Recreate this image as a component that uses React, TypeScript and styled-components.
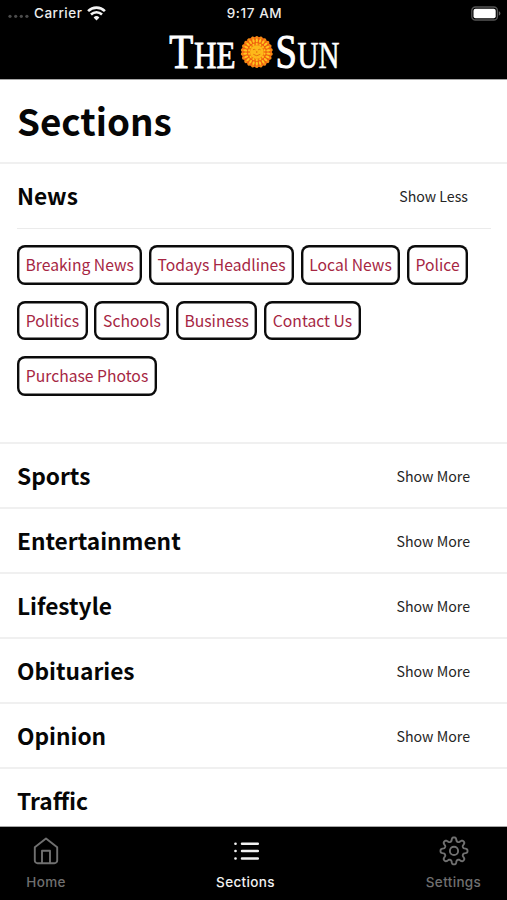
import React from "react";
import styled, { createGlobalStyle } from "styled-components";

const GlobalStyle = createGlobalStyle`
  * { box-sizing: border-box; }
  html, body, #root { margin: 0; height: 100%; }
  body { background: #fff; overflow: hidden; }
  h1, h2 { margin: 0; }
  button { font: inherit; border: 0; background: none; padding: 0; margin: 0; white-space: nowrap; }
`;

const sans = `"Noto Sans CJK SC", "Noto Sans", sans-serif`;
const system = `Inter, "Liberation Sans", sans-serif`;

const Screen = styled.div`
  width: 507px;
  height: 900px;
  display: flex;
  flex-direction: column;
  background: #fff;
  color: #060606;
  font-family: ${sans};
`;

const Header = styled.header`
  flex: none;
  height: 80px;
  background: #000;
  border-bottom: 1px solid #a6a6a6;
`;

const StatusBar = styled.div`
  height: 27px;
  display: grid;
  grid-template-columns: 1fr auto 1fr;
  align-items: center;
  padding: 0 6px 1px 8px;
  color: #ededed;
  font: 450 13.5px/26px ${system};
  svg { display: block; }
`;

const Signal = styled.div`
  display: flex;
  align-items: center;
`;

const Carrier = styled.span`
  margin: 0 5px 0 5px;
  letter-spacing: 0.5px;
`;

const Clock = styled.span`
  letter-spacing: 0.6px;
`;

const BatterySlot = styled.div`
  display: flex;
  justify-content: flex-end;
`;

const LogoRow = styled.div`
  display: flex;
  justify-content: center;
  margin-top: -6px;
  svg { display: block; }
`;

const Main = styled.main`
  flex: 1;
  min-height: 0;
  overflow: hidden;
`;

const PageTitle = styled.h1`
  height: 84px;
  padding-left: 17px;
  border-bottom: 2px solid #f0f0f0;
  font-size: 36.8px;
  line-height: 81px;
  font-weight: 700;
`;

const Section = styled.section<{ $height: number }>`
  height: ${(p) => p.$height}px;
  border-bottom: 2px solid #f0f0f0;
`;

const SectionHead = styled.div<{ $open?: boolean }>`
  height: ${(p) => (p.$open ? 65 : 63)}px;
  margin: 0 16px 0 17px;
  padding-right: ${(p) => (p.$open ? 23 : 21)}px;
  border-bottom: ${(p) => (p.$open ? "1px solid #ebebeb" : "0")};
  display: flex;
  align-items: center;
  justify-content: space-between;
`;

const SectionName = styled.h2`
  font-size: 22.7px;
  line-height: 34px;
  font-weight: 700;
`;

const Toggle = styled.button`
  color: #252525;
  font-size: 14.2px;
  line-height: 22px;
`;

const ChipList = styled.div`
  padding: 16px 17px 0;
  display: grid;
  row-gap: 16px;
`;

const ChipRow = styled.div`
  display: flex;
  gap: 6.6px;
`;

const Chip = styled.button<{ $width: number }>`
  flex: none;
  width: ${(p) => p.$width}px;
  height: 39.6px;
  padding-bottom: 0.6px;
  border-radius: 8px;
  box-shadow: inset 0 0 0 2.4px #0b0b0b;
  display: flex;
  align-items: center;
  justify-content: center;
  color: #a62643;
  font-size: 15.7px;
  line-height: 23px;
`;

const TabBar = styled.nav`
  flex: none;
  height: 74px;
  background: #000;
  border-top: 1px solid #a6a6a6;
  display: grid;
  grid-template-columns: 199.5px 208px 60px;
  justify-items: start;
  align-items: start;
  padding: 9px 0 0 16px;
`;

const Tab = styled.button<{ $active?: boolean }>`
  width: 60px;
  display: flex;
  flex-direction: column;
  align-items: center;
  gap: 6px;
  color: ${(p) => (p.$active ? "#f2f2f2" : "#707070")};
  font: 450 13.5px/20px ${system};
  letter-spacing: 0.35px;
  svg { display: block; flex: none; }
`;

const WifiIcon = () => (
  <svg width="19" height="15" viewBox="0 0 19 15" fill="none" stroke="#f4f4f4" strokeWidth="2.6">
    <path d="M1.1 5.1a12 12 0 0 1 16.8 0" />
    <path d="M4 8.5a8 8 0 0 1 11 0" />
    <path d="M6.6 11.4a4.3 4.3 0 0 1 5.8 0L9.5 14.4Z" fill="#f4f4f4" stroke="none" />
  </svg>
);

const SignalDots = () => (
  <svg width="21" height="10" viewBox="0 0 21 10" fill="#4c4c4c">
    {[2, 7.7, 13.3, 18.9].map((x) => (
      <circle key={x} cx={x} cy="8.3" r="1.6" />
    ))}
  </svg>
);

const Battery = () => (
  <svg width="30" height="15" viewBox="0 0 30 15">
    <rect x="0.8" y="1" width="25.6" height="13" rx="3.6" fill="none" stroke="#555" strokeWidth="1.3" />
    <rect x="2.5" y="2.7" width="22.2" height="9.6" rx="2" fill="#fff" />
    <path d="M27.8 5.3q1.6.6 1.6 2.2t-1.6 2.2Z" fill="#666" />
  </svg>
);

const ring = (count: number) => Array.from({ length: count }, (_, i) => (360 / count) * i);

const Logo = () => (
  <svg width="178" height="58" viewBox="-2 -6 178 58">
    <g fill="#fff" stroke="#fff" fontFamily="Liberation Serif, Times New Roman, serif">
      <text x="2.2" y="41.2" fontSize="48.5" strokeWidth="1.1" textLength="24" lengthAdjust="spacingAndGlyphs">T</text>
      <text x="27" y="41.2" fontSize="38" strokeWidth="0.8" textLength="41.6" lengthAdjust="spacingAndGlyphs">HE</text>
      <text x="108.4" y="41.2" fontSize="48.5" strokeWidth="1.1" textLength="21.4" lengthAdjust="spacingAndGlyphs">S</text>
      <text x="130.6" y="41.2" fontSize="38" strokeWidth="0.7" textLength="41.8" lengthAdjust="spacingAndGlyphs">UN</text>
    </g>
    <g transform="translate(89.8 25)">
      <circle r="15.2" fill="#f0600f" />
      {ring(22).map((a) => (
        <circle key={a} cy="-14.6" r="1.5" fill="#f58a14" transform={`rotate(${a})`} />
      ))}
      {ring(22).map((a) => (
        <ellipse key={a} cy="-11.6" rx="1.1" ry="2" fill="#ffc51f" transform={`rotate(${a})`} />
      ))}
      <circle r="9" fill="#f37a10" />
      {ring(14).map((a) => (
        <circle key={a} cy="-7.9" r="1" fill="#ffc71d" transform={`rotate(${a})`} />
      ))}
      <circle r="6.8" fill="#fdb91a" />
      <path d="M-3.8-2.2q1.3-1 2.4 0M1.4-2.2q1.2-1 2.4 0M0-1v2M-3.5 2.3Q0 5.2 3.5 2.3" fill="none" stroke="#e5730f" strokeWidth="1" />
    </g>
  </svg>
);

const HomeIcon = () => (
  <svg width="30" height="30" viewBox="0 0 30 30" fill="none" stroke="currentColor" strokeWidth="1.9" strokeLinejoin="round">
    <path d="M15 2.6 3.8 11.2v13.2a2.8 2.8 0 0 0 2.8 2.8h16.8a2.8 2.8 0 0 0 2.8-2.8V11.2Z" />
    <path d="M11 27V14.8h8V27" />
  </svg>
);

const ListIcon = () => (
  <svg width="30" height="30" viewBox="0 0 30 30" fill="none" stroke="currentColor" strokeWidth="2.5" strokeLinecap="round">
    <path d="M11 7.8h15.8M11 15.1h15.8M11 22.4h15.8" />
    <path d="M4.4 7.8h.2M4.4 15.1h.2M4.4 22.4h.2" />
  </svg>
);

const gearPath = (() => {
  const points: string[] = [];
  for (let i = 0; i <= 160; i++) {
    const t = (i / 160) * Math.PI * 2;
    const wave = Math.tanh(1.7 * Math.cos(8 * t)) / Math.tanh(1.7);
    const r = 11.6 + 1.9 * wave;
    points.push(`${(15 + r * Math.sin(t)).toFixed(2)} ${(14.9 - r * Math.cos(t)).toFixed(2)}`);
  }
  return `M${points.join("L")}Z`;
})();

const GearIcon = () => (
  <svg width="30" height="30" viewBox="0 0 30 30" fill="none" stroke="currentColor" strokeWidth="1.9" strokeLinejoin="round">
    <path d={gearPath} />
    <circle cx="15" cy="14.9" r="4.1" />
  </svg>
);

const newsRows: [string, number][][] = [
  [["Breaking News", 125.4], ["Todays Headlines", 145.2], ["Local News", 99.5], ["Police", 61.5]],
  [["Politics", 70.8], ["Schools", 75], ["Business", 81.4], ["Contact Us", 97]],
  [["Purchase Photos", 140]],
];

const collapsed = ["Sports", "Entertainment", "Lifestyle", "Obituaries", "Opinion"];

export default function App() {
  return (
    <Screen>
      <GlobalStyle />
      <Header>
        <StatusBar>
          <Signal>
            <SignalDots />
            <Carrier>Carrier</Carrier>
            <WifiIcon />
          </Signal>
          <Clock>9:17 AM</Clock>
          <BatterySlot>
            <Battery />
          </BatterySlot>
        </StatusBar>
        <LogoRow>
          <Logo />
        </LogoRow>
      </Header>
      <Main>
        <PageTitle>Sections</PageTitle>
        <Section $height={280}>
          <SectionHead $open>
            <SectionName>News</SectionName>
            <Toggle>Show Less</Toggle>
          </SectionHead>
          <ChipList>
            {newsRows.map((row, i) => (
              <ChipRow key={i}>
                {row.map(([label, width]) => (
                  <Chip key={label} $width={width}>{label}</Chip>
                ))}
              </ChipRow>
            ))}
          </ChipList>
        </Section>
        {collapsed.map((name) => (
          <Section key={name} $height={65}>
            <SectionHead>
              <SectionName>{name}</SectionName>
              <Toggle>Show More</Toggle>
            </SectionHead>
          </Section>
        ))}
        <SectionHead>
          <SectionName>Traffic</SectionName>
        </SectionHead>
      </Main>
      <TabBar>
        <Tab><HomeIcon />Home</Tab>
        <Tab $active><ListIcon />Sections</Tab>
        <Tab><GearIcon />Settings</Tab>
      </TabBar>
    </Screen>
  );
}
